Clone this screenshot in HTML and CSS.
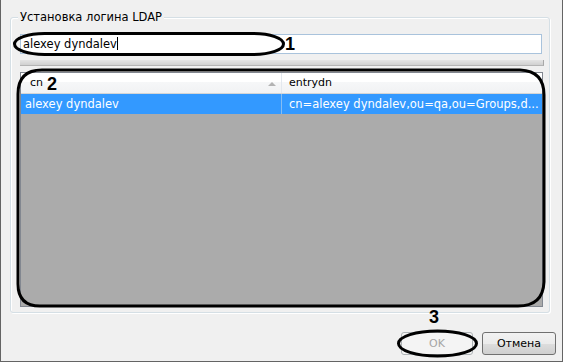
FILE: index.html
```html
<!DOCTYPE html>
<html lang="ru">
<head>
    <meta charset="UTF-8">
    <title>Установка логина LDAP</title>
    <link rel="stylesheet" href="styles.css">
</head>
<body>

    <!-- Dialog window -->
    <div class="window">

        <!-- Group box -->
        <div class="group">
            <div class="legend">Установка логина LDAP</div>

            <div class="inner">
                <!-- Search field -->
                <div class="input">alexey dyndalev<span class="caret"></span></div>

                <!-- Splitter -->
                <div class="splitter"></div>

                <!-- Results grid -->
                <div class="grid">
                    <div class="grid-head">
                        <div class="col col-cn">cn<span class="sort"></span></div>
                        <div class="col col-dn">entrydn</div>
                    </div>
                    <div class="grid-row selected">
                        <div class="col col-cn">alexey dyndalev</div>
                        <div class="col col-dn">cn=alexey dyndalev,ou=qa,ou=Groups,d...</div>
                    </div>
                </div>
            </div>
        </div>

        <!-- Buttons -->
        <div class="buttons">
            <button class="btn" disabled>OK</button>
            <button class="btn">Отмена</button>
        </div>

        <!-- Annotation marks drawn over the dialog -->
        <svg class="marks" width="563" height="362" viewBox="0 0 563 362">
            <rect x="14.5" y="33.5" width="269" height="21" rx="30" ry="10.5" fill="none" stroke="#000" stroke-width="3"/>
            <path d="M42 70 L520 70 Q544 71 544 95 L544 282 Q543 306 518 306 L40 306 Q18 306 18 284 L18 94 Q18 70 42 70 Z" fill="none" stroke="#000" stroke-width="3"/>
            <ellipse cx="437.5" cy="343.5" rx="39" ry="12.5" fill="none" stroke="#000" stroke-width="3"/>
            <text x="285" y="50" class="num">1</text>
            <text x="47" y="90" class="num">2</text>
            <text x="429" y="323" class="num">3</text>
        </svg>
    </div>

</body>
</html>
```

FILE: styles.css
```css
/* General */
body {
    margin: 0;
    padding: 0;
    background: #f0f0f0;
    font-family: "DejaVu Sans", Verdana, sans-serif;
    font-size: 11px;
    color: #000;
}

/* Window */
.window {
    position: relative;
    width: 563px;
    height: 362px;
    box-sizing: border-box;
    padding: 17px 6px 0 9px;
    background: #f0f0f0;
    border-left: 1px solid #646464;
    border-right: 1px solid #646464;
    border-bottom: 1px solid #646464;
}

/* Group box */
.group {
    height: 296px;
    margin-right: 6px;
    box-sizing: border-box;
    border: 1px solid #d5dfe5;
    border-radius: 3px;
    box-shadow: inset 1px 1px 0 #fff, 1px 1px 0 #fff;
}

.legend {
    display: table;
    margin: -8px 0 0 7px;
    padding: 0 2px;
    font-size: 11.5px;
    line-height: 14px;
    background: #f0f0f0;
}

.inner {
    padding: 0 6px 0 9px;
}

/* Input */
.input {
    height: 20px;
    margin-top: 10px;
    margin-right: 1px;
    box-sizing: border-box;
    padding: 0 2px;
    border: 1px solid #a9c3dc;
    background: #fff;
    font-size: 11.5px;
    line-height: 18px;
    white-space: nowrap;
}

.caret {
    display: inline-block;
    width: 1px;
    height: 13px;
    background: #000;
    vertical-align: -2px;
}

/* Splitter */
.splitter {
    height: 5px;
    margin-top: 6px;
    margin-right: -1px;
    background: linear-gradient(#e4e4e4, #d0d0d0);
    border-bottom: 1px solid #b4b4b4;
    border-right: 1px solid #a8a8a8;
}

/* Grid */
.grid {
    height: 235px;
    margin-top: 6px;
    box-sizing: border-box;
    border: 1px solid #828790;
    background: #ababab;
}

.grid-head,
.grid-row {
    display: flex;
    white-space: nowrap;
}

.grid-head {
    height: 21px;
    box-sizing: border-box;
    border-bottom: 1px solid #d5d5d5;
    background: linear-gradient(#ffffff 0%, #ffffff 45%, #f6f7f8 46%, #f1f2f4 100%);
    line-height: 20px;
}

.grid-row {
    height: 20px;
    line-height: 20px;
    font-size: 11.5px;
}

.col {
    box-sizing: border-box;
    overflow: hidden;
}

.col-cn {
    position: relative;
    width: 261px;
    flex: none;
    border-right: 1px solid #e3e8ee;
}

.col-dn {
    flex: 1;
    padding-left: 7px;
}

.grid-head .col-cn {
    padding-left: 9px;
}

.grid-row .col-cn {
    padding-left: 4px;
}

.sort {
    position: absolute;
    left: 247px;
    top: 9px;
    width: 0;
    height: 0;
    border-left: 4px solid transparent;
    border-right: 4px solid transparent;
    border-bottom: 4px solid #b3b3b3;
}

.selected {
    background: #3399ff;
    color: #fff;
}

.selected .col-cn {
    border-right-color: #86bdf2;
}

/* Buttons */
.buttons {
    display: flex;
    justify-content: flex-end;
    gap: 9px;
    margin-top: 19px;
}

.btn {
    height: 23px;
    padding: 0;
    box-sizing: border-box;
    border: 1px solid #707070;
    border-radius: 3px;
    background: linear-gradient(#f2f2f2 0%, #ebebeb 50%, #dddddd 51%, #cfcfcf 100%);
    font-family: "DejaVu Sans", Verdana, sans-serif;
    font-size: 11px;
    color: #000;
}

.btn:first-child {
    width: 72px;
}

.btn:last-child {
    width: 74px;
}

.btn:disabled {
    border-color: #adb2b5;
    background: #f4f4f4;
    color: #a6a6a6;
}

/* Annotation overlay */
.marks {
    position: absolute;
    left: -1px;
    top: 0;
    pointer-events: none;
}

.num {
    font-family: "Liberation Sans", Arial, sans-serif;
    font-size: 18px;
    font-weight: bold;
}
```
